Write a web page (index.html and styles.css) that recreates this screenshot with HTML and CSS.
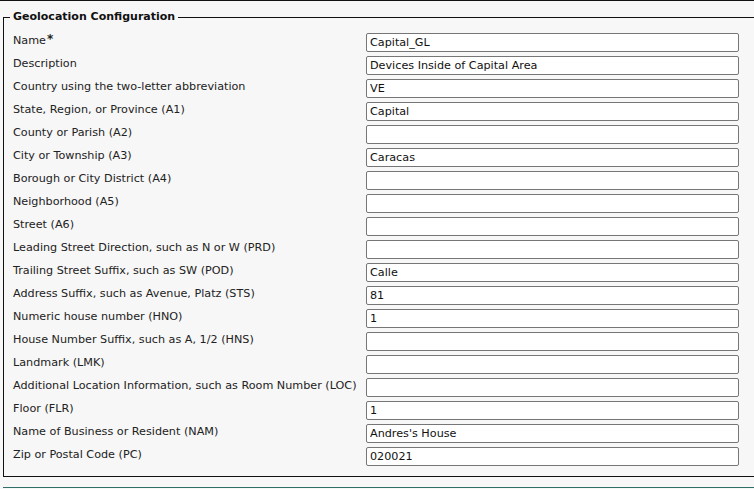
FILE: index.html
```html
<!DOCTYPE html>
<html>
<head>
<meta charset="utf-8">
<link rel="stylesheet" href="styles.css">
</head>
<body>
<div class="topline"></div>
<fieldset class="geo">
<legend>Geolocation Configuration</legend>
<div class="rows">
<div class="row"><label>Name<span class="req">*</span></label><input class="field" value="Capital_GL"></div>
<div class="row"><label>Description</label><input class="field" value="Devices Inside of Capital Area"></div>
<div class="row"><label>Country using the two-letter abbreviation</label><input class="field" value="VE"></div>
<div class="row"><label>State, Region, or Province (A1)</label><input class="field" value="Capital"></div>
<div class="row"><label>County or Parish (A2)</label><input class="field" value=""></div>
<div class="row"><label>City or Township (A3)</label><input class="field" value="Caracas"></div>
<div class="row"><label>Borough or City District (A4)</label><input class="field" value=""></div>
<div class="row"><label>Neighborhood (A5)</label><input class="field" value=""></div>
<div class="row"><label>Street (A6)</label><input class="field" value=""></div>
<div class="row"><label>Leading Street Direction, such as N or W (PRD)</label><input class="field" value=""></div>
<div class="row"><label>Trailing Street Suffix, such as SW (POD)</label><input class="field" value="Calle"></div>
<div class="row"><label>Address Suffix, such as Avenue, Platz (STS)</label><input class="field" value="81"></div>
<div class="row"><label>Numeric house number (HNO)</label><input class="field" value="1"></div>
<div class="row"><label>House Number Suffix, such as A, 1/2 (HNS)</label><input class="field" value=""></div>
<div class="row"><label>Landmark (LMK)</label><input class="field" value=""></div>
<div class="row"><label>Additional Location Information, such as Room Number (LOC)</label><input class="field" value=""></div>
<div class="row"><label>Floor (FLR)</label><input class="field" value="1"></div>
<div class="row"><label>Name of Business or Resident (NAM)</label><input class="field" value="Andres's House"></div>
<div class="row"><label>Zip or Postal Code (PC)</label><input class="field" value="020021"></div>
</div>
</fieldset>
<div class="bottomline"></div>
</body>
</html>
```
FILE: styles.css
```css
html, body {
  margin: 0;
  padding: 0;
  overflow: hidden;
  background: #f7f7f7;
  font-family: "DejaVu Sans", Verdana, sans-serif;
  font-size: 11.2px;
  color: #222;
}
.topline {
  height: 0;
  border-top: 1px solid #111;
  margin-bottom: 9px;
}
.geo {
  margin: 0 0 0 3px;
  width: 780px;
  border: 1px solid #111;
  padding: 9px 0 10px 9px;
  box-sizing: border-box;
}
.geo legend {
  font-weight: bold;
  font-size: 11px;
  padding: 0 3px;
  margin-left: -3px;
  line-height: 14px;
  color: #111;
}
.rows {
  display: flex;
  flex-direction: column;
  gap: 4px;
}
.row {
  display: grid;
  grid-template-columns: 353px 373px;
  align-items: center;
}
.row label {
  line-height: 14px;
  margin-top: -3px;
  white-space: nowrap;
}
.req {
  font-weight: bold;
  font-size: 12px;
  vertical-align: top;
  position: relative;
  top: -2px;
  margin-left: 1px;
}
.field {
  box-sizing: border-box;
  width: 373px;
  height: 19px;
  margin: 0;
  border: 1px solid #767676;
  border-radius: 2px;
  background: #fff;
  padding: 0 3px;
  line-height: 17px;
  font-family: "DejaVu Sans", Verdana, sans-serif;
  font-size: 11.2px;
  color: #111;
}
.bottomline {
  margin: 10px 0 0 3px;
  border-top: 1px solid #2f6f68;
}
```
